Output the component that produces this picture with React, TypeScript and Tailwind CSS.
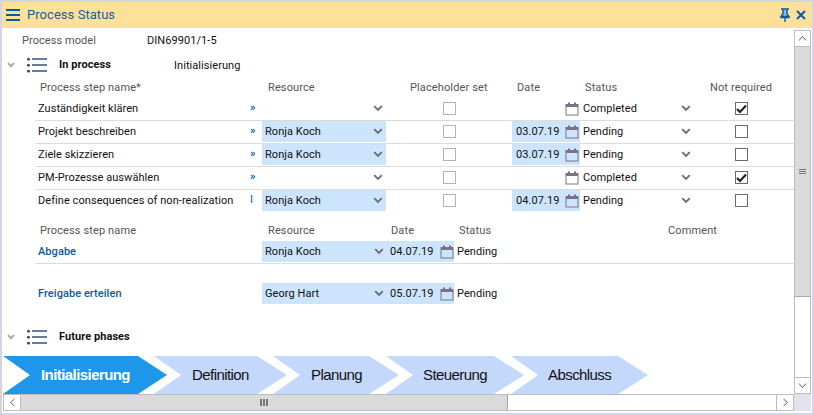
import React from "react";

const Chev = ({ className = "" }: { className?: string }) => (
  <svg width="10" height="7" viewBox="0 0 10 7" className={`shrink-0 ${className}`}>
    <path d="M1.2 1.2 L5 5 L8.8 1.2" fill="none" stroke="#6e6e6e" strokeWidth="1.9" />
  </svg>
);

const Cal = () => (
  <svg width="14" height="14" viewBox="0 0 14 14" className="shrink-0">
    <rect x="1" y="2.5" width="12" height="10.5" fill="none" stroke="#7d7285" strokeWidth="1" />
    <rect x="1" y="2.5" width="12" height="2.5" fill="#7d7285" />
    <rect x="3" y="0.5" width="2" height="3.5" fill="#7d7285" />
    <rect x="9" y="0.5" width="2" height="3.5" fill="#7d7285" />
  </svg>
);

const ListIcon = () => (
  <svg width="20" height="16" viewBox="0 0 20 16">
    <rect x="0" y="1" width="3" height="2.4" rx="1" fill="#2c4a70" />
    <rect x="0" y="7" width="3" height="2.4" rx="1" fill="#2c4a70" />
    <rect x="0" y="13" width="3" height="2.4" rx="1" fill="#2c4a70" />
    <rect x="5" y="1.2" width="15" height="1.6" fill="#3e5f88" />
    <rect x="5" y="7.2" width="15" height="1.6" fill="#3e5f88" />
    <rect x="5" y="13.2" width="15" height="1.6" fill="#3e5f88" />
  </svg>
);

const Check = ({ checked = false, muted = false }: { checked?: boolean; muted?: boolean }) => (
  <div
    className={`w-[13px] h-[13px] border bg-white flex items-center justify-center ${
      muted ? "border-[#b4b4b4]" : "border-[#6a6a6a]"
    }`}
  >
    {checked && (
      <svg width="11" height="10" viewBox="0 0 11 10">
        <path d="M1 5 L4 8 L10 1.5" fill="none" stroke="#222" strokeWidth="2.2" />
      </svg>
    )}
  </div>
);

const Sec = () => (
  <svg width="8" height="6" viewBox="0 0 8 6" className="ml-[5px] mr-[2px]">
    <path d="M1 1 L4 4.2 L7 1" fill="none" stroke="#a3a3a3" strokeWidth="1.8" />
  </svg>
);

type Row = { name: string; mark: string; res: string; date: string; status: string; done: boolean };

const rows: Row[] = [
  { name: "Zuständigkeit klären", mark: "»", res: "", date: "", status: "Completed", done: true },
  { name: "Projekt beschreiben", mark: "»", res: "Ronja Koch", date: "03.07.19", status: "Pending", done: false },
  { name: "Ziele skizzieren", mark: "»", res: "Ronja Koch", date: "03.07.19", status: "Pending", done: false },
  { name: "PM-Prozesse auswählen", mark: "»", res: "", date: "", status: "Completed", done: true },
  { name: "Define consequences of non-realization", mark: "I", res: "Ronja Koch", date: "04.07.19", status: "Pending", done: false },
];

const phases = [
  { label: "Definition", cls: "w-[133px] -ml-[13px] pl-[38px]" },
  { label: "Planung", cls: "w-[126px] -ml-[14px] pl-[38px]" },
  { label: "Steuerung", cls: "w-[138px] -ml-[13px] pl-[37px]" },
  { label: "Abschluss", cls: "w-[137px] -ml-[13px] pl-[37px]" },
];

export default function App() {
  return (
    <div className="w-[814px] h-[415px] bg-white border-2 border-[#d4d4e6] flex flex-col overflow-hidden font-['Roboto',sans-serif] text-[11px] tracking-[0.06px] text-[#111]">
      <header className="h-[26px] shrink-0 bg-[#fde19b] flex items-center pl-[4px] pr-[6px] text-[#1f5d94]">
        <svg width="14" height="12" viewBox="0 0 14 12" className="mr-[7px]">
          <rect y="0" width="14" height="2" fill="#0d5aa0" />
          <rect y="5" width="14" height="2" fill="#0d5aa0" />
          <rect y="10" width="14" height="2" fill="#0d5aa0" />
        </svg>
        <span className="text-[13px] tracking-[0.05px] flex-1">Process Status</span>
        <svg width="12" height="14" viewBox="0 0 12 14" className="mr-[5px]">
          <path d="M4 1.5 H8 V6 L10 8.5 H2 L4 6 Z" fill="#7dbcec" />
          <path d="M2 1 H10 M4 1 V6 L2 8.5 H10 L8 6 V1 M1.5 9.5 H10.5 M6 9.5 V14" fill="none" stroke="#0d5aa0" strokeWidth="1.4" />
        </svg>
        <svg width="10" height="10" viewBox="0 0 10 10">
          <path d="M1 1 L9 9 M9 1 L1 9" stroke="#0d5aa0" strokeWidth="2" />
        </svg>
      </header>

      <div className="flex-1 flex min-h-0 pb-[2px]">
        <div className="w-[792px] flex flex-col min-w-0">
          <main className="flex-1 min-h-0 relative">
            <div className="h-[26px] flex items-center pl-[20px] pt-[1px]">
              <span className="w-[125px] text-[#555]">Process model</span>
              <span>DIN69901/1-5</span>
            </div>
            <div className="h-[22px] flex items-center">
              <Sec />
              <span className="ml-[10px] mr-[12px] flex"><ListIcon /></span>
              <span className="w-[115px] font-bold">In process</span>
              <span className="pt-[2px]">Initialisierung</span>
            </div>
            <div className="ml-[33px] h-[22px] grid grid-cols-[227px_126px_124px_68px_125px_99px] items-center text-[#555] pt-[3px] tracking-[0.12px]">
              <span className="pl-[5px]">Process step name*</span>
              <span className="pl-[6px]">Resource</span>
              <span className="pl-[22px]">Placeholder set</span>
              <span className="pl-[5px]">Date</span>
              <span className="pl-[5px]">Status</span>
              <span className="pl-[5px]">Not required</span>
            </div>
            {rows.map((r, i) => (
              <div
                key={r.name}
                className={`ml-[33px] w-[759px] h-[23px] grid grid-cols-[212px_15px_124px_126px_68px_115px_99px] items-stretch ${
                  i === rows.length - 1 ? "pb-[2px]" : "pb-[1px] border-b border-[#dcdcdc]"
                }`}
              >
                <span className="pl-[3px] pt-[1px] flex items-center">{r.name}</span>
                <span className={`flex items-center text-[#0d5aa0] pl-[3px] ${r.mark === "I" ? "font-normal" : "font-bold"}`}>{r.mark}</span>
                <div className={`flex items-center justify-between pl-[3px] pr-[3px] ${r.res ? "bg-[#cce4fc]" : ""}`}>
                  <span className="pt-[1px]">{r.res}</span>
                  <Chev />
                </div>
                <div className="flex items-center justify-center">
                  <Check muted />
                </div>
                <div className={`flex items-center justify-between pl-[4px] pr-[1px] ${r.date ? "bg-[#cce4fc]" : ""}`}>
                  <span className="pt-[1px]">{r.date}</span>
                  <Cal />
                </div>
                <div className="flex items-center justify-between pl-[3px] pr-[3px]">
                  <span className="pt-[1px]">{r.status}</span>
                  <Chev className="mr-[1px]" />
                </div>
                <div className="flex items-center pl-[40px]">
                  <Check checked={r.done} />
                </div>
              </div>
            ))}

            <div className="ml-[33px] mt-[8px] h-[20px] pt-[1px] grid grid-cols-[227px_126px_68px_209px_100px] items-center text-[#555] tracking-[0.12px]">
              <span className="pl-[5px]">Process step name</span>
              <span className="pl-[6px]">Resource</span>
              <span className="pl-[3px]">Date</span>
              <span className="pl-[3px]">Status</span>
              <span className="pl-[3px]">Comment</span>
            </div>
            <div className="ml-[33px] w-[759px] h-[23px] pb-[1px] border-b border-[#dcdcdc] flex items-stretch">
              <span className="w-[227px] pl-[3px] pt-[2px] flex items-center font-medium text-[#0d5aa0]">Abgabe</span>
              <div className="w-[192px] bg-[#cce4fc] flex items-center pl-[3px]">
                <span className="w-[109px] pt-[2px] shrink-0">Ronja Koch</span>
                <Chev />
                <span className="ml-[6px] w-[50px] pt-[2px] shrink-0">04.07.19</span>
                <Cal />
              </div>
              <span className="pl-[3px] pt-[2px] flex items-center">Pending</span>
            </div>
            <div className="ml-[33px] mt-[19px] w-[759px] h-[21px] flex items-stretch">
              <span className="w-[227px] pl-[3px] pt-[2px] flex items-center font-medium text-[#0d5aa0]">Freigabe erteilen</span>
              <div className="w-[192px] bg-[#cce4fc] flex items-center pl-[3px]">
                <span className="w-[109px] pt-[2px] shrink-0">Georg Hart</span>
                <Chev />
                <span className="ml-[6px] w-[50px] pt-[2px] shrink-0">05.07.19</span>
                <Cal />
              </div>
              <span className="pl-[3px] pt-[2px] flex items-center">Pending</span>
            </div>
            <div className="mt-[21px] h-[24px] flex items-center">
              <Sec />
              <span className="ml-[10px] mr-[12px] flex"><ListIcon /></span>
              <span className="font-bold">Future phases</span>
            </div>

            <div className="absolute left-[1px] bottom-0 h-[38px] flex font-['Liberation_Sans',sans-serif] text-[15px] tracking-[-0.57px]">
              <div className="w-[164px] bg-[#1e96ea] text-white font-bold flex items-center pl-[38px] [clip-path:polygon(0_0,135px_0,100%_50%,135px_100%,0_100%,27px_50%)]">
                Initialisierung
              </div>
              {phases.map((p) => (
                <div
                  key={p.label}
                  className={`${p.cls} bg-[#c3d8fb] flex items-center [clip-path:polygon(0_0,calc(100%-30px)_0,100%_50%,calc(100%-30px)_100%,0_100%,27px_50%)]`}
                >
                  {p.label}
                </div>
              ))}
            </div>
          </main>

          <div className="h-[17px] ml-[1px] shrink-0 border border-[#bdbdbd] flex">
            <div className="w-[17px] shrink-0 border-r border-[#bdbdbd] flex items-center justify-center">
              <svg width="7" height="9" viewBox="0 0 7 9"><path d="M5.5 1 L1.5 4.5 L5.5 8" fill="none" stroke="#666" strokeWidth="1" /></svg>
            </div>
            <div className="w-[487px] shrink-0 bg-[#dadada] border-r border-[#a8a8a8] flex items-center justify-center gap-[1px]">
              <span className="w-[2px] h-[7px] bg-[#777]" />
              <span className="w-[2px] h-[7px] bg-[#777]" />
              <span className="w-[2px] h-[7px] bg-[#777]" />
            </div>
            <div className="flex-1" />
            <div className="w-[17px] shrink-0 border-l border-[#bdbdbd] flex items-center justify-center">
              <svg width="7" height="9" viewBox="0 0 7 9"><path d="M1.5 1 L5.5 4.5 L1.5 8" fill="none" stroke="#666" strokeWidth="1" /></svg>
            </div>
          </div>
        </div>

        <div className="w-[18px] shrink-0 flex flex-col pt-[2px] pr-[1px]">
          <div className="flex-1 border border-[#bdbdbd] flex flex-col">
            <div className="h-[16px] border-b border-[#bdbdbd] flex items-center justify-center">
              <svg width="9" height="7" viewBox="0 0 9 7"><path d="M1 5.5 L4.5 1.5 L8 5.5" fill="none" stroke="#666" strokeWidth="1" /></svg>
            </div>
            <div className="h-[250px] bg-[#dadada] border-b border-[#a8a8a8] flex flex-col items-center justify-center gap-[1px]">
              <span className="w-[7px] h-[1px] bg-[#777]" />
              <span className="w-[7px] h-[1px] bg-[#777]" />
              <span className="w-[7px] h-[1px] bg-[#777]" />
            </div>
            <div className="flex-1" />
            <div className="h-[16px] border-t border-[#bdbdbd] flex items-center justify-center">
              <svg width="9" height="7" viewBox="0 0 9 7"><path d="M1 1.5 L4.5 5.5 L8 1.5" fill="none" stroke="#666" strokeWidth="1" /></svg>
            </div>
          </div>
          <div className="h-[17px] shrink-0 bg-[#e6e0ea]" />
        </div>
      </div>
    </div>
  );
}
